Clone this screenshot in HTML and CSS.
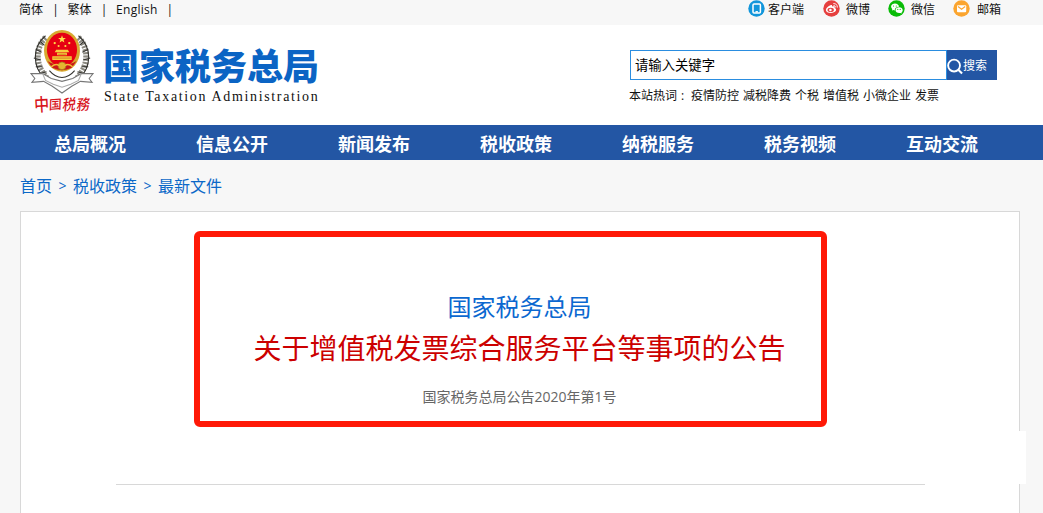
FILE: index.html
```html
<!DOCTYPE html>
<html lang="zh-CN">
<head>
<meta charset="utf-8">
<title>国家税务总局</title>
<link rel="stylesheet" href="styles.css">
</head>
<body>
<div class="topbar">
  <div class="langs"><span class="lang-hans">简体</span><i>|</i><span class="lang-hant">繁体</span><i>|</i><span class="lang-en">English</span><i>|</i></div>
  <div class="links">
    <span class="link client"><svg viewBox="0 0 17 17"><circle cx="8.5" cy="8.5" r="8.2" fill="#1296db"/><rect x="5" y="4" width="7.4" height="9" rx="1" fill="none" stroke="#fff" stroke-width="1.5"/><path d="M7.5 11.8h2.4" stroke="#fff" stroke-width="1.5"/></svg>客户端</span>
    <span class="link weibo"><svg viewBox="0 0 17 17"><circle cx="8.5" cy="8.5" r="8.2" fill="#e6403f"/><path d="M7.5 5.2c1-.4 1.8 0 1.5 1.2 2-.6 3 0 2.6 1.3 3.2 1.6 1 5.2-3.7 5.2-3 0-5-1.3-5-3C2.900 8.200 5.300 6 7.500 5.200z" fill="#fff"/><ellipse cx="7.700" cy="9.900" rx="3.200" ry="2.100" fill="#e6403f"/><circle cx="7.400" cy="10" r="1.300" fill="#fff"/><path d="M10.500 5.500q2-.1 2 1.900M10.300 3.600q4.200-.2 4 4" fill="none" stroke="#fff" stroke-width=".9"/></svg>微博</span>
    <span class="link wechat"><svg viewBox="0 0 17 17"><circle cx="8.500" cy="8.500" r="8.200" fill="#09bb07"/><path d="M4 10.500l.3-1.600C1.700 6.500 4 3.600 6.900 3.600c2.300 0 4 1.500 4.200 3.200-2.800 0-4.600 1.700-4.100 3.600-.6 0-1-.1-1.600-.3z" fill="#fff"/><path d="M11 7.300c2.200 0 3.700 1.300 3.700 2.900 0 .9-.5 1.600-1.200 2.200l.3 1.200-1.400-.7c-2.800.5-4.900-.9-4.900-2.700 0-1.600 1.500-2.900 3.500-2.900z" fill="#fff"/><g fill="#09bb07"><circle cx="5.500" cy="6" r=".6"/><circle cx="8.300" cy="6" r=".6"/><circle cx="9.800" cy="9.400" r=".55"/><circle cx="12.200" cy="9.400" r=".55"/></g></svg>微信</span>
    <span class="link mail"><svg viewBox="0 0 17 17"><circle cx="8.500" cy="8.500" r="8.200" fill="#fba52f"/><rect x="4" y="5.200" width="9.200" height="7" rx="1" fill="#fff"/><path d="M5 6.500l3.600 2.700 3.600-2.700" fill="none" stroke="#fba52f" stroke-width="1.100"/></svg>邮箱</span>
  </div>
</div>
<header class="header">
  <div class="emblem">
    <svg viewBox="0 0 70 68">
      <g fill="none" stroke="#8b8980" stroke-width="6" stroke-dasharray="2.200 1.200">
        <path d="M18 10C7 20 7 40 21 53"/><path d="M52 10C63 20 63 40 49 53"/>
      </g>
      <g fill="none" stroke="#33322e" stroke-width="1.100">
        <path d="M18 8C4 20 4 40 18 53M52 8C66 20 66 40 52 53"/>
        <path d="M13 14l4 4M8 22l6 3M6 31l7 2M8 40l7 0M13 47l6-2M57 14l-4 4M62 22l-6 3M64 31l-7 2M62 40l-7 0M57 47l-6-2"/>
        <path d="M22 44q6 7 13 7t13-7"/>
      </g>
      <path d="M3 47l12 0 9 5 11 3 11-3 9-5 12 0-4 5 3 4-12-1-9 5-10 7-10-7-9-5-12 1 3-4z" fill="#fff" stroke="#777" stroke-width="1.100"/>
      <path d="M15 47l3 7 8 4 9 3 9-3 8-4 3-7" fill="none" stroke="#aaa" stroke-width="1.100"/>
      <ellipse cx="35" cy="23.500" rx="18.500" ry="21.500" fill="#d7a92f"/>
      <ellipse cx="35" cy="22.500" rx="15.500" ry="17.500" fill="#e60012"/>
      <path d="M35 7.500l1 2.800h3l-2.400 1.800.9 2.900-2.500-1.700-2.500 1.700.9-2.900-2.400-1.800h3z" fill="#ffe04a"/>
      <g fill="#ffe04a"><circle cx="27.500" cy="15.500" r="1.200"/><circle cx="42.500" cy="15.500" r="1.200"/><circle cx="31.500" cy="18.500" r="1.100"/><circle cx="38.500" cy="18.500" r="1.100"/></g>
      <path d="M29 22.500h12l1.500 2.500h-15zM30 25.500h10v2.500H30zM25 29h20v4H25z" fill="#f6ce3c"/>
      <path d="M31 27h8M26 31h18" stroke="#c66b18" stroke-width=".8"/>
      <path d="M20 34q6 4 15 4t15-4l-5 7q-10 5-20 0z" fill="#c9161a"/>
      <circle cx="35" cy="39" r="4" fill="#e5b631" stroke="#a57a18" stroke-width=".8"/>
      <path d="M24 40q5-4 8-1M46 40q-5-4-8-1" fill="none" stroke="#edbd35" stroke-width="1.500"/>
    </svg>
    <div class="script"><span>中</span><span>国</span><span>税</span><span>務</span></div>
  </div>
  <div class="brand">
    <div class="brand-cn">国家税务总局</div>
    <div class="brand-en">State Taxation Administration</div>
  </div>
  <div class="search">
    <div class="search-row">
      <div class="field">请输入关键字</div>
      <div class="search-btn"><svg viewBox="0 0 17 18"><circle cx="7.500" cy="8" r="6.300" fill="none" stroke="#fff" stroke-width="2"/><path d="M12 12.500l4 4" stroke="#fff" stroke-width="2.200"/></svg><span>搜索</span></div>
    </div>
    <div class="hot"><span class="hot-label">本站热词<i>:</i></span><span>疫情防控</span><span>减税降费</span><span>个税</span><span>增值税</span><span>小微企业</span><span>发票</span></div>
  </div>
</header>
<nav class="nav"><span>总局概况</span><span>信息公开</span><span>新闻发布</span><span>税收政策</span><span>纳税服务</span><span>税务视频</span><span>互动交流</span></nav>
<div class="crumbs"><span>首页</span><i>&gt;</i><span>税收政策</span><i>&gt;</i><span>最新文件</span></div>
<main class="panel">
  <div class="notice">
    <div class="org">国家税务总局</div>
    <h1 class="title">关于增值税发票综合服务平台等事项的公告</h1>
    <div class="number">国家税务总局公告2020年第1号</div>
  </div>
  <div class="blank"></div>
  <div class="rule"></div>
</main>
</body>
</html>
```
FILE: styles.css
```css
* { box-sizing: border-box; }
body {
  margin: 0;
  height: 513px;
  overflow: hidden;
  display: flex;
  flex-direction: column;
  background: #f7f7f7;
  color: #111;
  font: 12px/20px "Open Sans", "Noto Sans CJK SC", sans-serif;
  white-space: nowrap;
}
i { font-style: normal; }
svg { display: block; flex: none; }

.topbar {
  flex: none;
  height: 25px;
  padding: 0 42px 0 19px;
  display: flex;
  justify-content: space-between;
}
.langs { display: flex; }
.langs i { width: 24px; text-align: center; }
.lang-hans, .lang-hant { width: 24.500px; }
.lang-en { letter-spacing: .3px; }
.links { display: flex; line-height: 20px; }
.link { display: flex; }
.link svg { width: 17px; height: 17px; }
.client { gap: 3px; }
.weibo { margin-left: 18px; gap: 6px; }
.wechat { margin-left: 18px; gap: 6px; }
.mail { margin-left: 18px; gap: 7px; }
.client { margin-left: -1px; }
.client + .weibo { margin-left: 19px; }

.header {
  flex: none;
  height: 100px;
  background: #fff;
  display: flex;
  padding-left: 27px;
}
.emblem { width: 70px; padding-top: 3px; }
.emblem svg { width: 70px; height: 66px; }
.script {
  display: flex;
  padding-left: 7px;
  color: #d8141c;
  font-size: 15px;
  font-weight: 500;
  line-height: 20px;
}
.script span { width: 14px; transform: skewX(-12deg) rotate(-5deg) scaleX(.88); }
.script span:first-child { transform: rotate(-3deg) scaleY(1.2); }
.script span:nth-child(2) { transform: skewX(-6deg) rotate(-4deg) scale(.85); }

.brand { width: 220px; margin-left: 6px; padding-top: 22px; }
.brand-cn {
  color: #0b64c4;
  font-size: 36px;
  font-weight: 900;
  line-height: 40px;
}
.brand-en {
  padding-left: 1px;
  font: 14px/20px "Liberation Serif", serif;
  letter-spacing: 1.650px;
}

.search { margin-left: 307px; padding-top: 25px; }
.search-row { display: flex; width: 367px; height: 30px; }
.field {
  width: 317px;
  border: 1px solid #2a8de0;
  padding-left: 4px;
  color: #000;
  font-size: 13.33px;
  line-height: 28px;
}
.search-btn {
  flex: 1;
  display: flex;
  align-items: center;
  background: #2356a4;
  color: #fff;
}
.search-btn svg { width: 16px; height: 17px; margin-top: 3px; }
.search-btn span { padding-top: 2px; }
.hot { display: flex; gap: 4px; margin: 6px 0 0 -1px; }
.hot-label { width: 58px; }
.hot-label i { margin-left: 4px; }

.nav {
  flex: none;
  height: 35px;
  padding-left: 19px;
  display: flex;
  background: #2356a4;
  color: #fff;
  font-size: 18px;
  font-weight: 700;
  line-height: 39px;
}
.nav span { width: 142px; text-align: center; }

.crumbs {
  flex: none;
  height: 51px;
  padding-left: 20px;
  display: flex;
  color: #0b68c8;
  font-size: 16px;
  line-height: 52px;
}
.crumbs i { width: 21px; text-align: center; font-size: 14px; }

.panel {
  flex: none;
  width: 1000px;
  height: 310px;
  margin-left: 20px;
  padding: 19px 0 0 173px;
  background: #fff;
  border: 1px solid #d8d8d8;
}
.notice {
  width: 633px;
  height: 196px;
  padding: 52px 0 0 18px;
  border: 6px solid #ff1907;
  border-radius: 6px;
  text-align: center;
}
.org { color: #0b68d0; font-size: 24px; line-height: 36px; }
.title { margin: 0; color: #c00; font-size: 28px; font-weight: 400; line-height: 46px; }
.number { margin-top: 16px; color: #666; font-size: 14px; line-height: 20px; }
.blank { width: 33px; height: 53px; margin: 4px 0 0 799px; background: #fff; }
.rule { width: 809px; height: 1px; margin-left: -78px; background: #d8d8d8; }
```
